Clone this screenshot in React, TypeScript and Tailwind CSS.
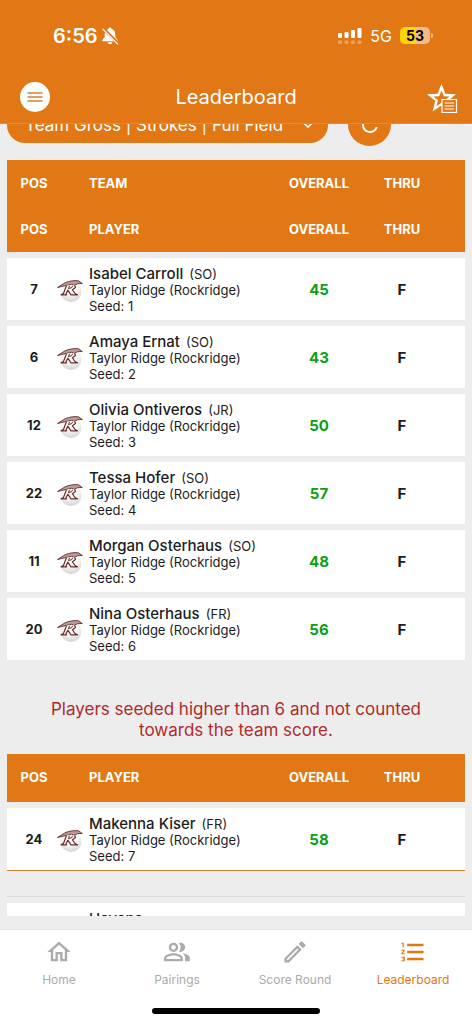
import React from "react";
import {
  MdFormatListNumbered,
  MdKeyboardArrowDown,
  MdOutlineHome,
  MdOutlineModeEdit,
  MdOutlinePeopleAlt,
  MdRefresh,
} from "react-icons/md";

type Player = {
  pos: number;
  name: string;
  grade: string;
  seed: number;
  overall: number;
};

const school = "Taylor Ridge (Rockridge)";

const players: Player[] = [
  { pos: 7, name: "Isabel Carroll", grade: "SO", seed: 1, overall: 45 },
  { pos: 6, name: "Amaya Ernat", grade: "SO", seed: 2, overall: 43 },
  { pos: 12, name: "Olivia Ontiveros", grade: "JR", seed: 3, overall: 50 },
  { pos: 22, name: "Tessa Hofer", grade: "SO", seed: 4, overall: 57 },
  { pos: 11, name: "Morgan Osterhaus", grade: "SO", seed: 5, overall: 48 },
  { pos: 20, name: "Nina Osterhaus", grade: "FR", seed: 6, overall: 56 },
];

const extraPlayers: Player[] = [
  { pos: 24, name: "Makenna Kiser", grade: "FR", seed: 7, overall: 58 },
];

function TeamLogo() {
  return (
    <svg viewBox="0 0 26 28" className="block h-7 w-[26px]" aria-label={school} role="img">
      <defs>
        <radialGradient id="ball" cx="45%" cy="25%" r="80%">
          <stop offset="0.4" stopColor="#ffffff" />
          <stop offset="1" stopColor="#d0d0d0" />
        </radialGradient>
      </defs>
      <circle cx="14" cy="15.500" r="10.500" fill="url(#ball)" />
      <path
        d="M0.5 11.500 L5 8.700 L9 6.300 L14 5 L18 4.600 L21.500 4.800 L25.300 7.500 L20.500 7.700 L17.500 9.300 L14.500 8.300 L9 9.500 Z"
        fill="#b59c9a"
        stroke="#66302e"
        strokeWidth="0.9"
        strokeLinejoin="round"
      />
      <path
        d="M9.500 9.500 L6.500 17.500 L4 18.800 H9.500 L9.200 17.500 L10.800 14.200 L14 18.800 H20.500 L18 17.500 L15.500 13.800 L18.500 11.500 L17.500 9.300"
        fill="#fbf7f7"
        stroke="#66302e"
        strokeWidth="1.200"
        strokeLinejoin="round"
      />
      <path d="M12.500 9.800 L11.500 12.600 L14.800 11.600 L15.500 9.800" fill="none" stroke="#66302e" strokeWidth="1" />
    </svg>
  );
}

function StatusBar() {
  return (
    <div className="flex h-[71px] items-center justify-between pr-[39px] pl-[53px]">
      <div className="flex items-center gap-0.5 text-xl font-semibold">
        <span>6:56</span>
        <svg viewBox="0 0 20 20" className="h-5 w-5" fill="currentColor" aria-hidden="true">
          <path d="M10 1.5c-.9 0-1.6.6-1.7 1.4C6 3.6 4.700 5.600 4.700 8v2.800c0 1-1.500 2-2.300 3.200-.4.7 0 1.300.8 1.300h13.600c.8 0 1.200-.6.8-1.300-.8-1.200-2.300-2.200-2.300-3.200V8c0-2.400-1.300-4.400-3.600-5.100-.1-.8-.8-1.400-1.700-1.400zM7.500 16.300c.3 1.200 1.300 2 2.500 2s2.200-.8 2.500-2z" />
          <path d="M2.800 2.200l15 15" stroke="#e17815" strokeWidth="3.200" />
          <path d="M2.500 2.800l15.500 15.500" stroke="currentColor" strokeWidth="1.200" />
        </svg>
      </div>
      <div className="flex items-center gap-2">
        <svg viewBox="0 0 24 16" className="h-4 w-6" fill="currentColor" aria-hidden="true">
          <rect x="0" y="5" width="4" height="5" rx="1" />
          <rect x="6.500" y="4" width="4" height="6" rx="1" />
          <rect x="13" y="2" width="4" height="8" rx="1" />
          <rect x="19.500" y="0" width="4" height="10" rx="1" />
          <g opacity="0.3">
            <rect x="0" y="12.500" width="4" height="3.500" rx="1" />
            <rect x="6.500" y="12.500" width="4" height="3.500" rx="1" />
            <rect x="13" y="12.500" width="4" height="3.500" rx="1" />
            <rect x="19.500" y="12.500" width="4" height="3.500" rx="1" />
          </g>
        </svg>
        <span className="text-base">5G</span>
        <div className="flex items-center gap-px">
          <span className="flex h-[17px] w-[30px] items-center justify-center rounded-[5px] bg-linear-to-r from-[#ffd60a] from-53% to-[#f2ba89] to-53% text-sm font-bold text-black">
            53
          </span>
          <span className="h-[5px] w-[2px] rounded-r-full bg-[#f2ba89]" />
        </div>
      </div>
    </div>
  );
}

function Header() {
  return (
    <header className="shrink-0 border-b border-[#e58a38] bg-[#e17815] text-white">
      <StatusBar />
      <div className="grid h-[52px] grid-cols-[1fr_auto_1fr] items-center px-5">
        <button
          type="button"
          aria-label="Menu"
          className="flex h-[30px] w-[30px] items-center justify-center rounded-full bg-white"
        >
          <svg viewBox="0 0 16 12" className="h-3 w-4" stroke="#d9822f" strokeWidth="1.600" aria-hidden="true">
            <path d="M0.500 2h15M0.500 6h15M0.500 10h15" />
          </svg>
        </button>
        <h1 className="text-xl">Leaderboard</h1>
        <button type="button" aria-label="Favorites" className="-mr-1.5 justify-self-end">
          <svg viewBox="0 0 32 32" className="block h-8 w-8" aria-hidden="true">
            <path
              d="M15.500 2.500L19.300 12.800L30 13.300L21.700 20L24.500 30.400L15.500 24.500L6.500 30.400L9.300 20L1 13.300L11.700 12.800ZM15.500 9.500L13.200 15.300L7.500 15.600L12 19.300L10.500 25L15.500 21.800L20.500 25L19 19.300L23.500 15.600L17.800 15.300Z"
              fill="#fff"
              fillRule="evenodd"
            />
            <rect x="16" y="18.500" width="14.500" height="13" fill="#e17815" stroke="#fff" strokeWidth="1.200" />
            <path d="M18.500 22h9.500M18.500 25h9.500M18.500 28h9.500" stroke="#fff" strokeWidth="1.200" />
          </svg>
        </button>
      </div>
    </header>
  );
}

function Filters() {
  return (
    <div className="-mt-[21px] flex items-center gap-5">
      <div className="relative w-[321px]">
        <select
          aria-label="Leaderboard type"
          className="h-9 w-full appearance-none rounded-full bg-[#e17815] pt-0.5 pr-10 pl-[18px] text-[17px] text-white"
        >
          <option>Team Gross | Strokes | Full Field</option>
        </select>
        <MdKeyboardArrowDown className="pointer-events-none absolute top-2 right-2.5 h-5 w-5 text-white" />
      </div>
      <button
        type="button"
        aria-label="Refresh"
        className="flex h-[43px] w-[43px] items-center justify-center rounded-full bg-[#e17815] text-white"
      >
        <MdRefresh className="h-6 w-6" />
      </button>
    </div>
  );
}

function HeadRow({ label, className }: { label: string; className: string }) {
  return (
    <tr className={className}>
      <th scope="col" className="pl-1">POS</th>
      <th scope="col" colSpan={2} className="pl-8 text-left">{label}</th>
      <th scope="col">OVERALL</th>
      <th scope="col">THRU</th>
      <td></td>
    </tr>
  );
}

function ScoreTable({ labels, rows }: { labels: string[]; rows: Player[] }) {
  return (
    <table className="w-full table-fixed border-separate border-spacing-0">
      <colgroup>
        <col className="w-[50px]" />
        <col className="w-8" />
        <col />
        <col className="w-[84px]" />
        <col className="w-[82px]" />
        <col className="w-[22px]" />
      </colgroup>
      <thead className="bg-[#e17815] text-[13px] font-bold text-white">
        {labels.map((label, i) => (
          <HeadRow key={label} label={label} className={i === 0 ? "h-12" : "h-11"} />
        ))}
      </thead>
      <tbody>
        {rows.map((item) => (
          <tr
            key={item.seed}
            className="h-[68px] bg-white *:border-t-6 *:border-[#ededed]"
          >
            <td className="pt-0.5 pl-1 text-center text-[13px] font-bold">{item.pos}</td>
            <td className="pt-0.5">
              <TeamLogo />
            </td>
            <td className="pt-0.5 text-[13px] leading-4 whitespace-nowrap">
              <p>
                <span className="mr-1.5 text-[15px] font-medium">{item.name}</span>
                <span>({item.grade})</span>
              </p>
              <p>{school}</p>
              <p>Seed: {item.seed}</p>
            </td>
            <td className="pt-0.5 text-center text-[15px] font-bold text-[#0f9f0f]">{item.overall}</td>
            <td className="pt-0.5 text-center text-[15px] font-bold">F</td>
            <td></td>
          </tr>
        ))}
      </tbody>
    </table>
  );
}

const tabs = [
  { label: "Home", Icon: MdOutlineHome, active: false },
  { label: "Pairings", Icon: MdOutlinePeopleAlt, active: false },
  { label: "Score Round", Icon: MdOutlineModeEdit, active: false },
  { label: "Leaderboard", Icon: MdFormatListNumbered, active: true },
];

function BottomNav() {
  return (
    <nav className="shrink-0 border-t border-[#e4e4e4] bg-white pb-2.5">
      <div className="grid h-[78px] grid-cols-4">
        {tabs.map(({ label, Icon, active }) => (
          <a
            key={label}
            href="#"
            className={
              active
                ? "flex flex-col items-center pt-2 text-[#e17815]"
                : "flex flex-col items-center pt-2 text-[#ababab]"
            }
          >
            <Icon className="h-7 w-7" />
            <span className="mt-1.5 text-xs">{label}</span>
          </a>
        ))}
      </div>
      <div className="mx-auto h-1.5 w-[168px] rounded-full bg-black" />
    </nav>
  );
}

export default function App() {
  return (
    <div className="flex h-screen flex-col bg-[#ededed] font-['Inter',sans-serif] text-[#1c1c1e]">
      <Header />
      <main className="mb-[13px] min-h-0 flex-1 overflow-hidden px-[7px]">
        <Filters />
        <div className="mt-3.5">
          <ScoreTable labels={["TEAM", "PLAYER"]} rows={players} />
        </div>
        <p className="mt-[39px] mb-[13px] px-6 text-center text-[17px] leading-[21px] text-[#b02a2a]">
          Players seeded higher than 6 and not counted towards the team score.
        </p>
        <div className="border-b border-[#d98231]">
          <ScoreTable labels={["PLAYER"]} rows={extraPlayers} />
        </div>
        <div className="mt-[25px] border-t border-[#dcdcdf] pt-1.5">
          <div className="bg-white pt-1.5 pl-[82px] text-[15px] leading-5 font-medium">Havana</div>
        </div>
      </main>
      <BottomNav />
    </div>
  );
}
